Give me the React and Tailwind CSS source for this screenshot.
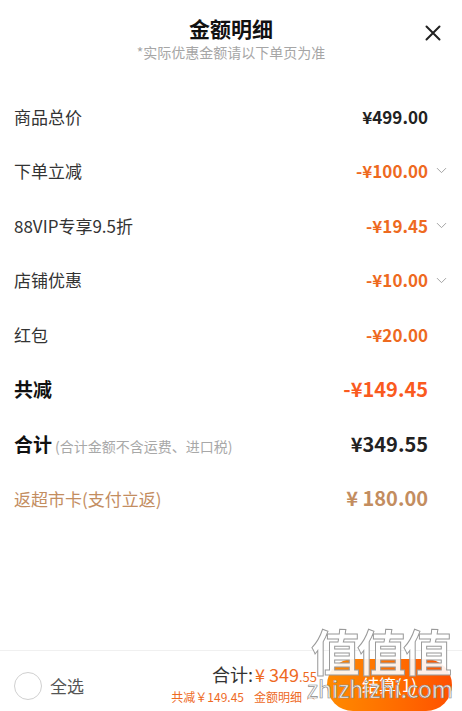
import { ChevronDown, ChevronUp } from 'lucide-react'

const font = { fontFamily: '"Noto Sans CJK SC", "Noto Sans", sans-serif' }

const rows = [
  { label: '商品总价', value: '¥499.00', tone: 'dark' },
  { label: '下单立减', value: '-¥100.00', tone: 'orange', more: true },
  { label: '88VIP专享9.5折', value: '-¥19.45', tone: 'orange', more: true },
  { label: '店铺优惠', value: '-¥10.00', tone: 'orange', more: true },
  { label: '红包', value: '-¥20.00', tone: 'orange' },
]

function Row({ label, note, value, labelClass, valueClass, more }) {
  return (
    <div className="flex h-[54.6px] items-center pl-[14px] pr-[12px]">
      <div className="flex flex-1 items-baseline">
        <span className={labelClass}>{label}</span>
        {note && <span className="ml-[3px] text-[14px] text-[#a8a8a8]">{note}</span>}
      </div>
      <span className={valueClass}>{value}</span>
      <div className="flex w-[22px] justify-end">
        {more && <ChevronDown size={17} strokeWidth={1.3} className="text-[#9c9c9c]" />}
      </div>
    </div>
  )
}

export default function App() {
  return (
    <div className="relative flex h-[711px] w-[462px] flex-col overflow-hidden bg-white" style={font}>
      {/* header */}
      <div className="relative flex h-[89px] flex-col items-center pt-[14px]">
        <h1 className="text-[21px] font-bold leading-[29px] text-[#111]">金额明细</h1>
        <p className="text-[14px] leading-[18px] text-[#a6a6a6]">*实际优惠金额请以下单页为准</p>
        <svg className="absolute right-[21px] top-[25px]" width="16" height="16" viewBox="0 0 16 16">
          <path d="M1.5 1.5 L14.5 14.5 M14.5 1.5 L1.5 14.5" stroke="#222" strokeWidth="2" strokeLinecap="round" />
        </svg>
      </div>

      {rows.map((r) => (
        <Row
          key={r.label}
          label={r.label}
          value={r.value}
          more={r.more}
          labelClass="text-[17px] text-[#333]"
          valueClass={r.tone === 'dark' ? 'text-[17px] font-bold text-[#222]' : 'text-[17px] font-bold text-[#ee6a1f]'}
        />
      ))}
      <Row label="共减" value="-¥149.45" labelClass="text-[19px] font-bold text-[#111]" valueClass="text-[20px] font-bold text-[#fa5a1e]" />
      <Row
        label="合计"
        note="(合计金额不含运费、进口税)"
        value="¥349.55"
        labelClass="text-[19px] font-bold text-[#111]"
        valueClass="text-[20px] font-bold text-[#222]"
      />
      <Row label="返超市卡(支付立返)" value="¥ 180.00" labelClass="text-[17px] text-[#c38d5f]" valueClass="text-[20px] font-bold text-[#c38d5f]" />

      <div className="flex-1" />

      {/* bottom bar */}
      <div className="flex h-[61px] items-start border-t border-[#f0f0f0]">
        <div className="mt-[21px] flex items-center pl-[14px]">
          <span className="h-[28px] w-[28px] rounded-full border-[1.5px] border-[#d0d0d0]" />
          <span className="ml-[8px] text-[17px] text-[#555]">全选</span>
        </div>
        <div className="ml-auto mr-[10px] mt-[11px] flex flex-col items-end">
          <div className="flex items-baseline leading-[25px]">
            <span className="text-[18px] text-[#333]">合计:</span>
            <span className="ml-[2px] text-[18px] text-[#ee6a1f]">¥ 349</span>
            <span className="text-[13px] text-[#ee6a1f]">.55</span>
          </div>
          <div className="flex items-center text-[12px] leading-[16px] text-[#ee6a1f]">
            <span>共减￥149.45</span>
            <span className="ml-[10px]">金额明细</span>
            <ChevronUp size={13} strokeWidth={1.5} className="ml-[2px] text-[#ee6a1f]" />
          </div>
        </div>
        <button className="mr-[10px] mt-[8px] flex h-[52px] w-[125px] items-center justify-center rounded-full bg-gradient-to-r from-[#ff8a00] to-[#ff5000] text-[17px] text-white">
          结算(1)
        </button>
      </div>

      {/* watermark */}
      <div className="pointer-events-none absolute left-[307px] top-[622px] flex flex-col items-center">
        <span className="text-[49px] font-bold leading-[56px] tracking-[-3px] text-white/90 [-webkit-text-stroke:1px_#9a9a9a]">值值值</span>
        <span className="-mt-[2px] text-[23px] leading-[24px] text-white/90 [-webkit-text-stroke:0.7px_#8a8a8a]">zhizhizhi.com</span>
      </div>
    </div>
  )
}
